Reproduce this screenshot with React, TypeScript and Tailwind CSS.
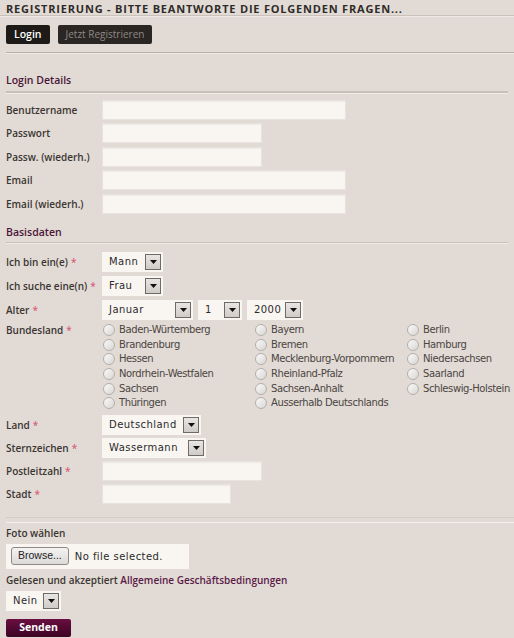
import React from "react";

const Req = () => <span className="text-[#d8607a] ml-[3px]">*</span>;

function Label({ children, req }: { children: React.ReactNode; req?: boolean }) {
  return (
    <div className="w-[96px] shrink-0 text-[10px] font-semibold text-[#3a3532] leading-none whitespace-nowrap">
      {children}
      {req && <Req />}
    </div>
  );
}

function TextInput({ w }: { w: number }) {
  return (
    <div
      className="h-[20px] bg-[#f9f6f2] border border-[#e9e3dd] shadow-[inset_0_1px_1px_rgba(0,0,0,0.05)]"
      style={{ width: w }}
    />
  );
}

function Arrow() {
  return (
    <div className="w-[16px] h-[16px] border border-[#6f6a66] bg-gradient-to-b from-[#e8e6e4] to-[#cfcbc8] flex items-center justify-center shrink-0">
      <svg width="7" height="4" viewBox="0 0 7 4">
        <path d="M0 0 L7 0 L3.5 4 Z" fill="#111" />
      </svg>
    </div>
  );
}

function Select({ value, w }: { value: string; w: number }) {
  return (
    <div
      className="h-[20px] bg-[#f9f6f2] flex items-center justify-between pl-[7px] pr-[2px]"
      style={{ width: w }}
    >
      <span className="text-[10px] tracking-[0.45px] text-[#2a2a2a] font-['DejaVu_Sans',sans-serif] leading-none">
        {value}
      </span>
      <Arrow />
    </div>
  );
}

function Radio({ label }: { label: string }) {
  return (
    <div className="flex items-center h-[14.6px] whitespace-nowrap">
      <div className="w-[12px] h-[12px] rounded-full border border-[#b4afab] bg-gradient-to-br from-[#fafafa] to-[#d9d6d3] ml-[1px] mr-[4px] shrink-0" />
      <span className="text-[10px] text-[#4a4542] font-['DejaVu_Sans',sans-serif] leading-none tracking-[-0.4px]">
        {label}
      </span>
    </div>
  );
}

const col1 = ["Baden-Würtemberg", "Brandenburg", "Hessen", "Nordrhein-Westfalen", "Sachsen", "Thüringen"];
const col2 = ["Bayern", "Bremen", "Mecklenburg-Vorpommern", "Rheinland-Pfalz", "Sachsen-Anhalt", "Ausserhalb Deutschlands"];
const col3 = ["Berlin", "Hamburg", "Niedersachsen", "Saarland", "Schleswig-Holstein"];

function Row({ label, req, children }: { label: string; req?: boolean; children: React.ReactNode }) {
  return (
    <div className="flex items-center">
      <Label req={req}>{label}</Label>
      {children}
    </div>
  );
}

export default function App() {
  return (
    <div className="w-[514px] h-[638px] bg-[#e2dbd5] overflow-hidden font-['Open_Sans',sans-serif]">
      {/* title */}
      <div className="pt-[2px] px-[6px] h-[15px] text-[11px] font-bold uppercase tracking-[0.8px] text-[#2f2b29] leading-[13px] whitespace-nowrap">
        Registrierung - Bitte beantworte die folgenden Fragen...
      </div>
      <div className="h-[1px] bg-[#c9c1ba]" />
      <div className="h-[1px] bg-[#efebe7]" />
      {/* buttons */}
      <div className="flex gap-[8px] px-[6px] pt-[8px]">
        <div className="h-[19px] px-[8px] rounded-[2px] bg-[#1d1a18] text-white text-[10.5px] font-semibold flex items-center">
          Login
        </div>
        <div className="h-[19px] px-[8px] rounded-[2px] bg-[#2a2624] text-[#8e8884] text-[10px] flex items-center">
          Jetzt Registrieren
        </div>
      </div>
      <div className="ml-[6px] mt-[8px] h-[1px] bg-[#b9b0a9]" />
      <div className="ml-[6px] h-[1px] bg-[#efebe7]" />

      <div className="px-[6px]">
        <div className="mt-[21px] text-[10.5px] font-semibold text-[#4a1538] leading-none">Login Details</div>
        <div className="mt-[5px] h-[3px] bg-[#c7bfb8] border-b border-[#efebe7]" />

        <div className="mt-[6px] flex flex-col gap-[3.5px]">
          <Row label="Benutzername"><TextInput w={244} /></Row>
          <Row label="Passwort"><TextInput w={160} /></Row>
          <Row label="Passw. (wiederh.)"><TextInput w={160} /></Row>
          <Row label="Email"><TextInput w={244} /></Row>
          <Row label="Email (wiederh.)"><TextInput w={244} /></Row>
        </div>

        <div className="mt-[13px] text-[10.5px] font-semibold text-[#4a1538] leading-none">Basisdaten</div>
        <div className="mt-[5px] h-[2px] bg-[#c7bfb8] border-b border-[#efebe7]" />

        <div className="mt-[8px] flex flex-col gap-[4px]">
          <Row label="Ich bin ein(e)" req><Select value="Mann" w={61} /></Row>
          <Row label="Ich suche eine(n)" req><Select value="Frau" w={61} /></Row>
          <Row label="Alter" req>
            <div className="flex gap-[5px]">
              <Select value="Januar" w={91} />
              <Select value="1" w={44} />
              <Select value="2000" w={56} />
            </div>
          </Row>
        </div>

        <div className="flex mt-[3px]">
          <div className="w-[96px] shrink-0 pt-[2px]">
            <Label req>Bundesland</Label>
          </div>
          <div className="grid grid-cols-[152px_152px_1fr]">
            <div className="flex flex-col">{col1.map((c) => <Radio key={c} label={c} />)}</div>
            <div className="flex flex-col">{col2.map((c) => <Radio key={c} label={c} />)}</div>
            <div className="flex flex-col">{col3.map((c) => <Radio key={c} label={c} />)}</div>
          </div>
        </div>

        <div className="mt-[4px] flex flex-col gap-[3px]">
          <Row label="Land" req><Select value="Deutschland" w={99} /></Row>
          <Row label="Sternzeichen" req><Select value="Wassermann" w={104} /></Row>
          <Row label="Postleitzahl" req><TextInput w={160} /></Row>
          <Row label="Stadt" req><TextInput w={129} /></Row>
        </div>
      </div>

      <div className="ml-[6px] mt-[13px] h-[1px] bg-[#d3cbc4]" />
      <div className="ml-[6px] mt-[4px] h-[1px] bg-[#f3efeb]" />

      <div className="px-[6px]">
        <div className="mt-[3px] text-[10px] font-semibold text-[#3a3532] leading-[14px]">Foto wählen</div>
        <div className="mt-[4px] w-[183px] h-[25px] bg-[#f9f6f2] flex items-center pl-[5px] gap-[6px]">
          <div className="h-[18px] px-[6px] rounded-[3px] border border-[#8d8986] bg-gradient-to-b from-[#f4f3f2] to-[#dcdad8] text-[10.5px] text-[#222] font-['Liberation_Sans',sans-serif] flex items-center">
            Browse...
          </div>
          <span className="text-[10px] tracking-[0.45px] text-[#2a2a2a] font-['DejaVu_Sans',sans-serif]">No file selected.</span>
        </div>
        <div className="mt-[4px] text-[10px] font-semibold text-[#3a3532] leading-[14px] whitespace-nowrap">
          Gelesen und akzeptiert <span className="text-[#5a1a48]">Allgemeine Geschäftsbedingungen</span>
        </div>
        <div className="mt-[4px]">
          <Select value="Nein" w={55} />
        </div>
        <div className="mt-[8px] w-[65px] h-[18px] rounded-[2px] bg-gradient-to-b from-[#6a0f42] to-[#3c0424] text-white text-[10.5px] font-bold flex items-center justify-center">
          Senden
        </div>
      </div>
    </div>
  );
}
